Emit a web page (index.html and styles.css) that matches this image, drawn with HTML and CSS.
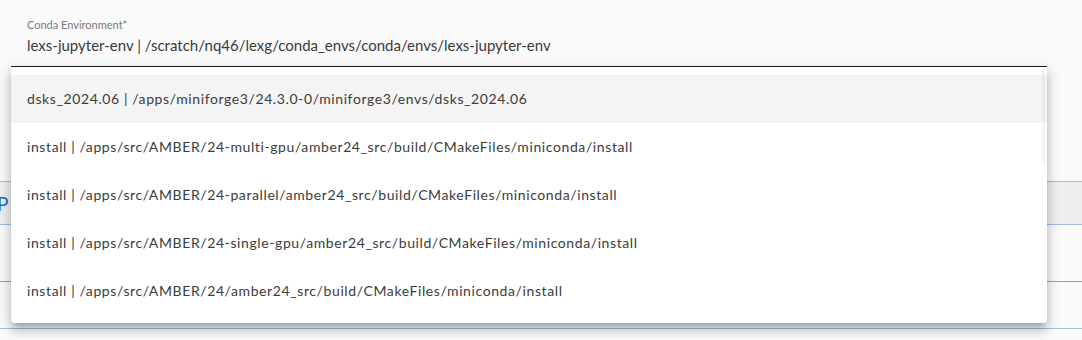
FILE: index.html
```html
<!DOCTYPE html>
<html lang="en">
<head>
  <meta charset="UTF-8">
  <meta name="viewport" content="width=device-width, initial-scale=1.0">
  <title>Conda Environment</title>
  <link rel="stylesheet" href="styles.css">
</head>
<body>

  <div class="page">

    <div class="field">
      <label class="field-label">Conda Environment*</label>
      <div class="field-value">lexs-jupyter-env | /scratch/nq46/lexg/conda_envs/conda/envs/lexs-jupyter-env</div>

      <ul class="menu">
        <li class="active">dsks_2024.06 | /apps/miniforge3/24.3.0-0/miniforge3/envs/dsks_2024.06</li>
        <li>install | /apps/src/AMBER/24-multi-gpu/amber24_src/build/CMakeFiles/miniconda/install</li>
        <li>install | /apps/src/AMBER/24-parallel/amber24_src/build/CMakeFiles/miniconda/install</li>
        <li>install | /apps/src/AMBER/24-single-gpu/amber24_src/build/CMakeFiles/miniconda/install</li>
        <li>install | /apps/src/AMBER/24/amber24_src/build/CMakeFiles/miniconda/install</li>
        <div class="scrollbar"></div>
      </ul>
    </div>

    <div class="rows">
      <div class="row head"><span class="tab">P</span></div>
      <div class="row"></div>
      <div class="row dark"></div>
    </div>

  </div>

</body>
</html>
```

FILE: styles.css
```css
body {
  margin: 0;
  background-color: #fafafa;
  font-family: Lato, "Open Sans", sans-serif;
  color: #333;
}
.page {
  height: 340px;
  overflow: hidden;
}
.field {
  position: relative;
  margin: 0 35px 0 11px;
  padding: 18px 16px 0;
  height: 48px;
  border-bottom: 1px solid #1c1c1c;
  z-index: 2;
}
.field-label {
  display: block;
  font-size: 11px;
  color: #7a7a7a;
  line-height: 14px;
}
.field-value {
  font-size: 15px;
  line-height: 26px;
  color: #3a3a3a;
}
.menu {
  position: absolute;
  top: 100%;
  left: 0;
  right: 0;
  margin: 1px 0 0;
  padding: 8px 0;
  list-style: none;
  background-color: #ffffff;
  border-radius: 0 0 4px 4px;
  box-shadow: 0 5px 5px -3px rgba(0,0,0,0.2), 0 8px 10px 1px rgba(0,0,0,0.14), 0 3px 14px 2px rgba(0,0,0,0.12);
}
.menu li {
  height: 48px;
  line-height: 48px;
  padding: 0 16px;
  font-size: 14px;
  letter-spacing: 0.6px;
  color: #3c3c3c;
  white-space: nowrap;
}
.menu li.active {
  background-color: #f4f4f4;
}
.scrollbar {
  position: absolute;
  top: 3px;
  right: 2px;
  width: 3px;
  height: 93px;
  background-color: rgba(0,0,0,0.04);
}
.rows {
  margin-top: 114px;
  background-color: #f1f1f1;
}
.row {
  height: 56px;
  border-top: 1px solid #a3bbe6;
  background-color: #fafafa;
}
.row.head {
  height: 42px;
  background-color: #efefef;
}
.row.dark {
  height: 46px;
  border-top-color: #8d9fc4;
  border-bottom: 1px solid #a3bbe6;
}
.tab {
  display: block;
  margin-left: -3px;
  padding-top: 10px;
  font-size: 19px;
  color: #1e6cc8;
}
```
